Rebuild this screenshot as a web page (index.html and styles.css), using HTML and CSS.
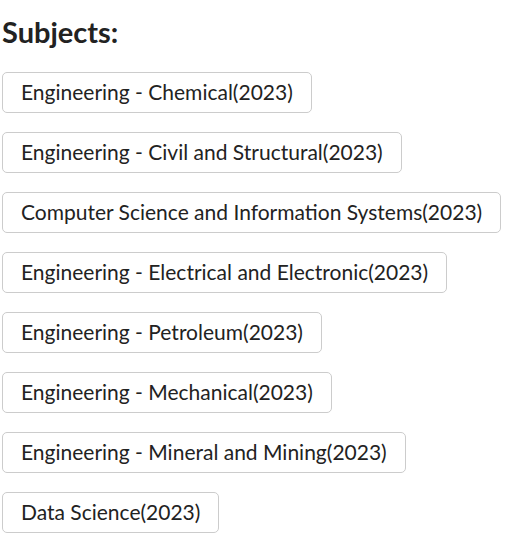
FILE: index.html
```html
<!DOCTYPE html>
<html>
<head>
<meta charset="utf-8">
<link rel="stylesheet" href="styles.css">
</head>
<body>
<div class="subjects">
  <h2 class="title">Subjects:</h2>
  <div class="list">
    <button class="chip">Engineering - Chemical(2023)</button>
    <button class="chip">Engineering - Civil and Structural(2023)</button>
    <button class="chip">Computer Science and Information Systems(2023)</button>
    <button class="chip">Engineering - Electrical and Electronic(2023)</button>
    <button class="chip">Engineering - Petroleum(2023)</button>
    <button class="chip">Engineering - Mechanical(2023)</button>
    <button class="chip">Engineering - Mineral and Mining(2023)</button>
    <button class="chip">Data Science(2023)</button>
  </div>
</div>
</body>
</html>
```

FILE: styles.css
```css
html, body {
  margin: 0;
  padding: 0;
  background: #fff;
}
.subjects {
  padding: 14px 0 0 2px;
  font-family: Lato, "Open Sans", sans-serif;
  color: #222;
}
.title {
  margin: 0 0 22px 0;
  font-size: 29px;
  font-weight: 700;
  line-height: 36px;
  color: #222;
}
.list {
  display: flex;
  flex-direction: column;
  align-items: flex-start;
  gap: 19px;
}
.chip {
  font-family: Lato, "Open Sans", sans-serif;
  font-size: 21px;
  line-height: 23px;
  color: #222;
  background: #fff;
  border: 1px solid #ccc;
  border-radius: 5px;
  padding: 7px 18px 9px;
  margin: 0;
}
```
